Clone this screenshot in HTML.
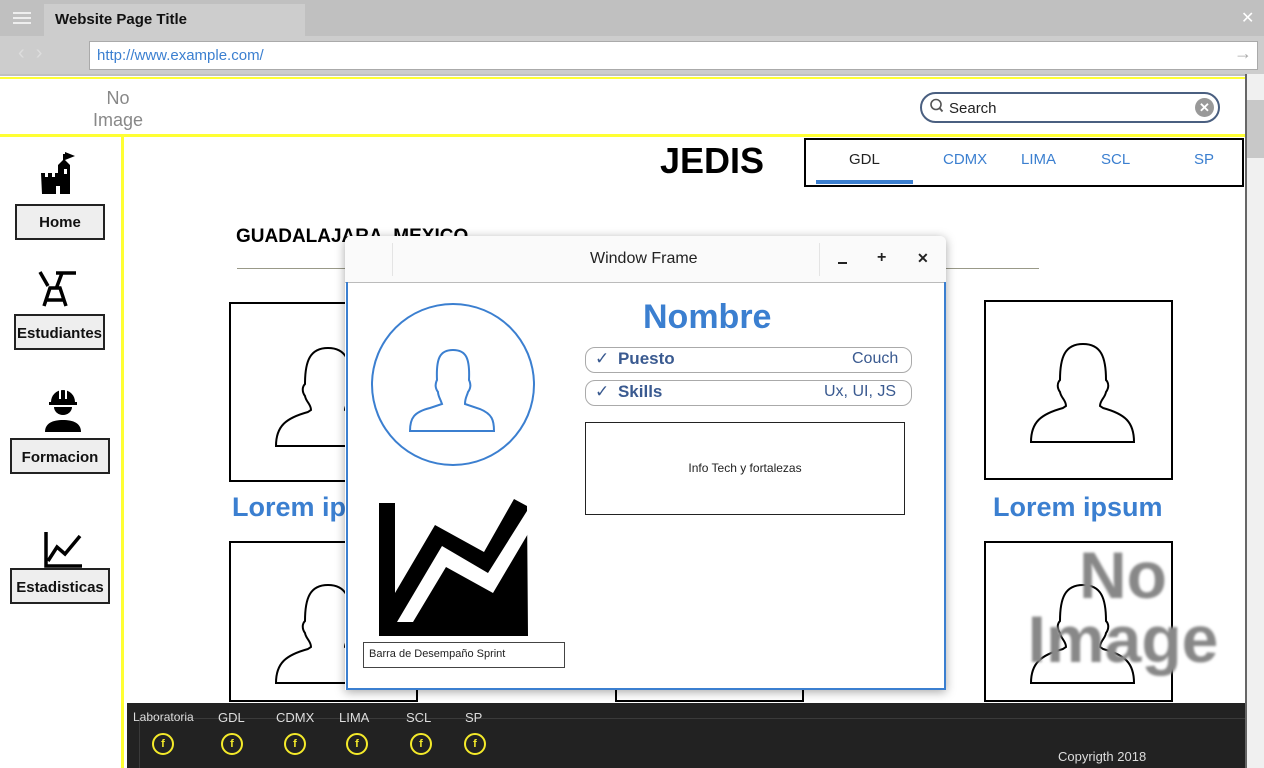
<!DOCTYPE html>
<html><head><meta charset="utf-8"><style>
*{box-sizing:border-box;margin:0;padding:0}
body{width:1264px;height:768px;overflow:hidden;position:relative;background:#fff;font-family:"Liberation Sans",sans-serif}
.a{position:absolute}
.btn{position:absolute;border:2px solid #222;background:#eee;font-weight:bold;font-size:15px;text-align:center;color:#111}
.card{position:absolute;border:2px solid #000;background:#fff;width:189px;height:180px}
.lorem{position:absolute;color:#3b7fd0;font-weight:bold;font-size:27px}
.fb{position:absolute;width:22px;height:22px;border:2px solid #f4ea2a;border-radius:50%;color:#f4ea2a;font-size:11px;font-weight:bold;text-align:center;line-height:18px}
.fl{position:absolute;color:#ddd;font-size:13px;top:710px}
</style></head><body>
<div class="a" style="left:0;top:0;width:1264px;height:76px;background:#c0c0c0"></div>
<div class="a" style="left:44px;top:4px;width:261px;height:34px;background:#cdcdcd"></div>
<div class="a" style="left:13px;top:12px;width:18px;height:2px;background:#eee;box-shadow:0 5px #eee,0 10px #eee"></div>
<div class="a" style="left:55px;top:11px;font-size:15px;font-weight:bold;color:#111">Website Page Title</div>
<div class="a" style="left:1241px;top:8px;font-size:16px;color:#fff">✕</div>
<div class="a" style="left:0;top:36px;width:1264px;height:38px;background:#cdcdcd"></div>
<div class="a" style="left:18px;top:42px;font-size:20px;color:#ddd">‹ &nbsp;›</div>
<div class="a" style="left:89px;top:41px;width:1169px;height:29px;background:#fff;border:1px solid #aaa"></div>
<div class="a" style="left:97px;top:47px;font-size:15px;color:#3b7fd0">http://www.example.com/</div>
<div class="a" style="left:1234px;top:43px;font-size:18px;color:#aaa">→</div>
<div class="a" style="left:1245px;top:74px;width:19px;height:694px;background:#f0f0f0;border-left:2px solid #666"></div>
<div class="a" style="left:1247px;top:100px;width:17px;height:58px;background:#c8c8c8"></div>
<div class="a" style="left:0;top:77px;width:1245px;height:2px;background:#ffff33"></div>
<div class="a" style="left:0;top:134px;width:1245px;height:3px;background:#ffff33"></div>
<div class="a" style="left:90px;top:87px;width:56px;text-align:center;font-size:18px;color:#888;line-height:22px">No<br>Image</div>
<div class="a" style="left:920px;top:92px;width:300px;height:31px;border:2px solid #4a5f80;border-radius:16px;background:#fff"></div>
<svg class="a" style="left:929px;top:98px" width="16" height="16" viewBox="0 0 16 16"><circle cx="7" cy="6.5" r="5" fill="none" stroke="#555" stroke-width="1.6"/><path d="M10.5,10l3,3.5" stroke="#555" stroke-width="1.8"/></svg>
<div class="a" style="left:949px;top:100px;font-size:15px;color:#222">Search</div>
<div class="a" style="left:1195px;top:98px;width:19px;height:19px;background:#999;border-radius:50%;color:#fff;font-size:13px;text-align:center;line-height:19px;font-weight:bold">✕</div>
<div class="a" style="left:121px;top:136px;width:3px;height:632px;background:#ffff33"></div>
<svg class="a" style="left:40px;top:152px" width="40" height="42" viewBox="0 0 40 42"><path d="M1,21h4v4h3v-4h4v4h3v-4h3v-8l5,-5v-6h2v-2l10,4l-10,4v0l5,5v29h-10v-8h-4v8h-14z" fill="#000"/><rect x="24" y="17" width="3" height="5" fill="#fff"/></svg>
<div class="btn" style="left:15px;top:204px;width:90px;height:36px;line-height:34px">Home</div>
<svg class="a" style="left:38px;top:270px" width="40" height="38" viewBox="0 0 40 38"><path d="M2,2l8,14M18,3h20M24,3l-6,16M6,36l6,-18h10l6,18M9,30h17" stroke="#000" stroke-width="3.5" fill="none"/></svg>
<div class="btn" style="left:14px;top:314px;width:91px;height:36px;line-height:36px">Estudiantes</div>
<svg class="a" style="left:44px;top:388px" width="38" height="44" viewBox="0 0 38 44"><path d="M7,14a12,12 0 0 1 24,0h2v3h-28v-3z" fill="#000"/><path d="M10,19h18a9,8 0 0 1 -18,0z" fill="#000"/><path d="M1,44c0,-9 8,-12 18,-12s18,3 18,12z" fill="#000"/><rect x="15" y="2" width="2" height="9" fill="#fff"/><rect x="21" y="2" width="2" height="9" fill="#fff"/></svg>
<div class="btn" style="left:10px;top:438px;width:100px;height:36px;line-height:36px">Formacion</div>
<svg class="a" style="left:44px;top:532px" width="40" height="36" viewBox="0 0 40 36"><path d="M2,0v34h36M4,29l9,-14l8,7l15,-18" stroke="#000" stroke-width="3.5" fill="none"/></svg>
<div class="btn" style="left:10px;top:568px;width:100px;height:36px;line-height:36px">Estadisticas</div>
<div class="a" style="left:660px;top:140px;font-size:36px;font-weight:bold;color:#000">JEDIS</div>
<div class="a" style="left:804px;top:138px;width:440px;height:49px;border:2px solid #000"></div>
<div class="a" style="left:849px;top:151px;font-size:15px;color:#222">GDL</div>
<div class="a" style="left:816px;top:180px;width:97px;height:4px;background:#3b7fd0"></div>
<div class="a" style="left:943px;top:151px;font-size:15px;color:#3b7fd0">CDMX</div>
<div class="a" style="left:1021px;top:151px;font-size:15px;color:#3b7fd0">LIMA</div>
<div class="a" style="left:1101px;top:151px;font-size:15px;color:#3b7fd0">SCL</div>
<div class="a" style="left:1194px;top:151px;font-size:15px;color:#3b7fd0">SP</div>
<div class="a" style="left:236px;top:226px;font-size:19px;font-weight:bold;color:#000">GUADALAJARA, MEXICO</div>
<div class="a" style="left:237px;top:268px;width:802px;height:1px;background:#999988"></div>
<svg width="0" height="0" style="position:absolute"><defs><path id="p" d="M45,140C45,120 55,112 77,106L80,104C80,98 75,96 74,90C71,86 71,81 74,78C74,55 79,42 97,42C115,42 120,55 120,78C123,81 123,86 120,90C119,96 114,98 114,104L117,106C139,112 148,120 148,140Z" fill="none" stroke="#000" stroke-width="2"/></defs></svg>
<div class="card" style="left:229px;top:302px"><svg width="189" height="180"><use href="#p" transform="translate(0,2)"/></svg></div>
<div class="card" style="left:984px;top:300px"><svg width="189" height="180"><use href="#p"/></svg></div>
<div class="lorem" style="left:232px;top:492px">Lorem ipsum</div>
<div class="lorem" style="left:993px;top:492px">Lorem ipsum</div>
<div class="card" style="left:229px;top:541px;height:161px"><svg width="189" height="160"><use href="#p"/></svg></div>
<div class="card" style="left:615px;top:541px;height:161px"></div>
<div class="card" style="left:984px;top:541px;height:161px"><svg width="189" height="160"><use href="#p"/></svg></div>
<div class="a" style="left:973px;top:543px;width:300px;font-size:66px;font-weight:bold;color:#888;line-height:64px;text-align:center;filter:blur(1.2px)">No<br>Image</div>
<div class="a" style="left:127px;top:703px;width:1118px;height:65px;background:#222"></div>
<div class="a" style="left:140px;top:718px;width:1105px;height:1px;background:#3a3a3a"></div>
<div class="a" style="left:139px;top:718px;width:1px;height:50px;background:#3a3a3a"></div>
<div class="fl" style="left:133px;font-size:12px">Laboratoria</div>
<div class="fl" style="left:218px">GDL</div>
<div class="fl" style="left:276px">CDMX</div>
<div class="fl" style="left:339px">LIMA</div>
<div class="fl" style="left:406px">SCL</div>
<div class="fl" style="left:465px">SP</div>
<div class="fb" style="left:152px;top:733px">f</div>
<div class="fb" style="left:221px;top:733px">f</div>
<div class="fb" style="left:284px;top:733px">f</div>
<div class="fb" style="left:346px;top:733px">f</div>
<div class="fb" style="left:410px;top:733px">f</div>
<div class="fb" style="left:464px;top:733px">f</div>
<div class="a" style="left:1058px;top:749px;font-size:13px;color:#ddd">Copyrigth 2018</div>
<div class="a" style="left:345px;top:236px;width:601px;height:454px;box-shadow:0 2px 10px rgba(0,0,0,.35);border-radius:6px 6px 0 0;background:#fff"></div>
<div class="a" style="left:345px;top:236px;width:601px;height:47px;background:#fafafa;border-radius:6px 6px 0 0;border-bottom:1px solid #bbb"></div>
<div class="a" style="left:392px;top:243px;width:1px;height:33px;background:#e4e4e4"></div>
<div class="a" style="left:819px;top:243px;width:1px;height:33px;background:#e4e4e4"></div>
<div class="a" style="left:590px;top:250px;font-size:16px;color:#222">Window Frame</div>
<div class="a" style="left:838px;top:262px;width:9px;height:2px;background:#222"></div>
<div class="a" style="left:877px;top:249px;font-size:16px;font-weight:bold;color:#222">+</div>
<div class="a" style="left:917px;top:250px;font-size:14px;font-weight:bold;color:#222">✕</div>
<div class="a" style="left:346px;top:282px;width:600px;height:408px;border:2px solid #3b7fd0;border-top:none"></div>
<div class="a" style="left:371px;top:303px;width:164px;height:163px;border:2px solid #3b7fd0;border-radius:50%"></div>
<svg class="a" style="left:400px;top:338px" width="104" height="96" viewBox="0 0 104 96"><path d="M10,93C10,80 14,74 30,70L42,66C40,60 38,58 38,54C35,50 35,46 37,42C36,20 40,12 53,12C66,12 70,20 69,42C71,46 71,50 68,54C67,58 65,60 65,66L80,71C92,76 94,82 94,93Z" fill="none" stroke="#3b7fd0" stroke-width="2"/></svg>
<div class="a" style="left:643px;top:298px;font-size:34px;font-weight:bold;color:#3b7fd0">Nombre</div>
<div class="a" style="left:585px;top:347px;width:327px;height:26px;border:1px solid #aaa;border-radius:10px"></div>
<div class="a" style="left:595px;top:349px;font-size:17px;color:#3a5a90">✓ <b style="margin-left:4px">Puesto</b></div>
<div class="a" style="left:852px;top:350px;font-size:16px;color:#3a5a90">Couch</div>
<div class="a" style="left:585px;top:380px;width:327px;height:26px;border:1px solid #aaa;border-radius:10px"></div>
<div class="a" style="left:595px;top:382px;font-size:17px;color:#3a5a90">✓ <b style="margin-left:4px">Skills</b></div>
<div class="a" style="left:824px;top:383px;font-size:16px;color:#3a5a90">Ux, UI, JS</div>
<div class="a" style="left:585px;top:422px;width:320px;height:93px;border:1.5px solid #222"></div>
<div class="a" style="left:585px;top:461px;width:320px;text-align:center;font-size:12px;color:#222">Info Tech y fortalezas</div>
<svg class="a" style="left:0;top:0" width="1264" height="768"><path d="M379,503H395V593L435,525L484,552L514,499L527,506L528,636H379Z" fill="#000"/><path d="M532,503L488,573L442,546L397,622L413,622L446,567L493,593L532,527Z" fill="#fff"/></svg>
<div class="a" style="left:363px;top:642px;width:202px;height:26px;border:1.5px solid #444"></div>
<div class="a" style="left:369px;top:648px;font-size:11px;color:#222">Barra de Desempaño Sprint</div>
</body></html>
